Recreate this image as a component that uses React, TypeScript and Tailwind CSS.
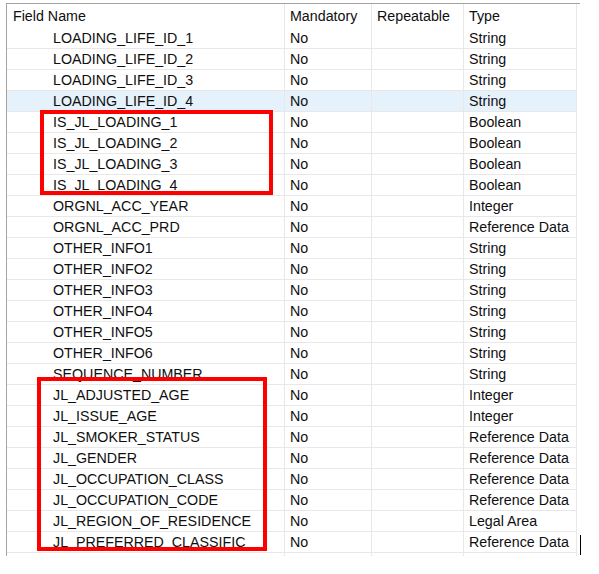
import React from "react";

type Row = { name: string; type: string; selected?: boolean };

const rows: Row[] = [
  { name: "LOADING_LIFE_ID_1", type: "String" },
  { name: "LOADING_LIFE_ID_2", type: "String" },
  { name: "LOADING_LIFE_ID_3", type: "String" },
  { name: "LOADING_LIFE_ID_4", type: "String", selected: true },
  { name: "IS_JL_LOADING_1", type: "Boolean" },
  { name: "IS_JL_LOADING_2", type: "Boolean" },
  { name: "IS_JL_LOADING_3", type: "Boolean" },
  { name: "IS_JL_LOADING_4", type: "Boolean" },
  { name: "ORGNL_ACC_YEAR", type: "Integer" },
  { name: "ORGNL_ACC_PRD", type: "Reference Data" },
  { name: "OTHER_INFO1", type: "String" },
  { name: "OTHER_INFO2", type: "String" },
  { name: "OTHER_INFO3", type: "String" },
  { name: "OTHER_INFO4", type: "String" },
  { name: "OTHER_INFO5", type: "String" },
  { name: "OTHER_INFO6", type: "String" },
  { name: "SEQUENCE_NUMBER", type: "String" },
  { name: "JL_ADJUSTED_AGE", type: "Integer" },
  { name: "JL_ISSUE_AGE", type: "Integer" },
  { name: "JL_SMOKER_STATUS", type: "Reference Data" },
  { name: "JL_GENDER", type: "Reference Data" },
  { name: "JL_OCCUPATION_CLASS", type: "Reference Data" },
  { name: "JL_OCCUPATION_CODE", type: "Reference Data" },
  { name: "JL_REGION_OF_RESIDENCE", type: "Legal Area" },
  { name: "JL_PREFERRED_CLASSIFIC", type: "Reference Data" },
];

const cols = "grid grid-cols-[278px_87px_92px_113px_1fr]";
const cell = "border-r border-[#e8e8e8] overflow-hidden whitespace-nowrap";

export default function App() {
  return (
    <div className="relative w-[599px] h-[574px] bg-white text-[14.25px] text-[#0f0f0f] font-['Liberation_Sans',Arial,sans-serif]">
      <div className="pt-[3px] pl-[6px]">
        <div className="w-[574px] border-t border-l border-[#a3a3a3]">
          {/* header */}
          <div className={`${cols} h-[24px] leading-[24px]`}>
            <div className={`${cell} pl-[6px]`}>Field Name</div>
            <div className={`${cell} pl-[5px]`}>Mandatory</div>
            <div className={`${cell} pl-[5px]`}>Repeatable</div>
            <div className={`${cell} pl-[5px]`}>Type</div>
            <div />
          </div>

          {rows.map((r) => (
            <div
              key={r.name}
              className={`${cols} h-[21px] leading-[20px] ${r.selected ? "bg-[#e5f1fb]" : ""}`}
            >
              <div className={`${cell} pl-[46px] border-b`}>{r.name}</div>
              <div className={`${cell} pl-[5px] border-b`}>No</div>
              <div className={`${cell} border-b`} />
              <div className={`${cell} pl-[5px] border-b`}>{r.type}</div>
              <div className="bg-white" />
            </div>
          ))}

          <div className={`${cols} h-[3px]`}>
            <div className={cell} />
            <div className={cell} />
            <div className={cell} />
            <div className={cell} />
            <div />
          </div>
        </div>
      </div>

      {/* annotation boxes drawn over the table */}
      <div className="absolute left-[40px] top-[110px] w-[233px] h-[85px] border-4 border-[#ff0000]" />
      <div className="absolute left-[37px] top-[377px] w-[230px] h-[174px] border-4 border-[#ff0000]" />

      {/* text cursor */}
      <div className="absolute left-[580px] top-[535px] w-px h-[20px] bg-black" />
    </div>
  );
}
